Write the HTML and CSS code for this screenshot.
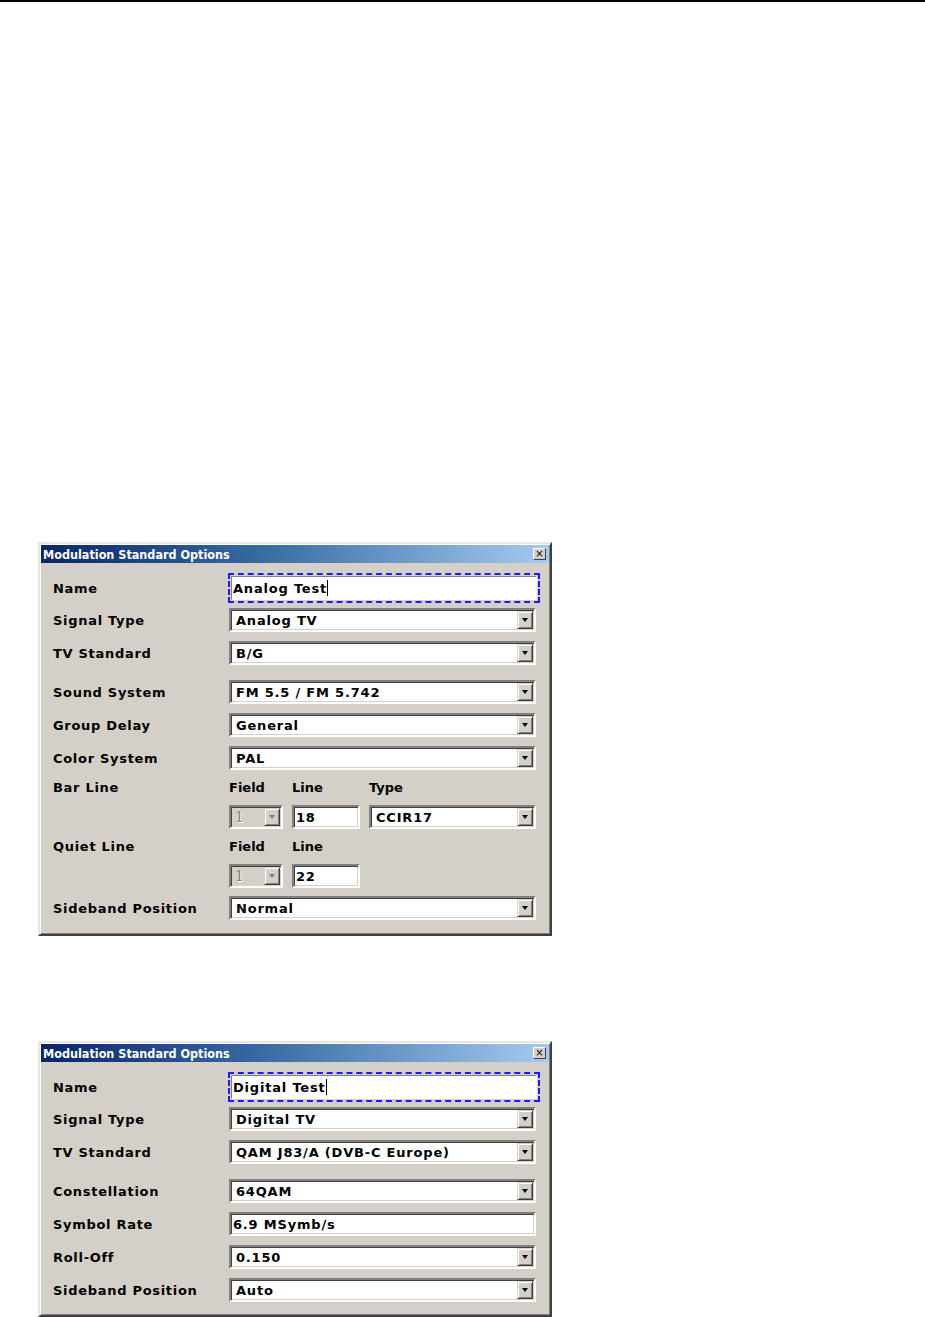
FILE: index.html
```html
<!DOCTYPE html>
<html lang="en">
<head>
    <meta charset="UTF-8">
    <title>Modulation Standard Options</title>
    <link rel="stylesheet" href="styles.css">
</head>
<body>
    <div class="rule"></div>
    <div class="page">
        <div class="dialog first">
            <div class="titlebar">
                <span class="title">Modulation Standard Options</span>
                <span class="close">&#215;</span>
            </div>
            <div class="body">
                <div class="row name-row">
                    <span class="label">Name</span>
                    <div class="focus"><div class="input">Analog Test<span class="caret"></span></div></div>
                </div>
                <div class="row gap-s">
                    <span class="label">Signal Type</span>
                    <div class="combo"><span class="value">Analog TV</span><span class="arrow"></span></div>
                </div>
                <div class="row">
                    <span class="label">TV Standard</span>
                    <div class="combo"><span class="value">B/G</span><span class="arrow"></span></div>
                </div>
                <div class="row gap-l">
                    <span class="label">Sound System</span>
                    <div class="combo"><span class="value">FM 5.5 / FM 5.742</span><span class="arrow"></span></div>
                </div>
                <div class="row">
                    <span class="label">Group Delay</span>
                    <div class="combo"><span class="value">General</span><span class="arrow"></span></div>
                </div>
                <div class="row">
                    <span class="label">Color System</span>
                    <div class="combo"><span class="value">PAL</span><span class="arrow"></span></div>
                </div>
                <div class="row head-row">
                    <span class="label">Bar Line</span>
                    <div class="sub">
                        <span>Field</span><span>Line</span><span>Type</span>
                    </div>
                </div>
                <div class="row sub-row">
                    <span class="label"></span>
                    <div class="sub">
                        <div class="combo disabled"><span class="value">1</span><span class="arrow"></span></div>
                        <div class="input">18</div>
                        <div class="combo"><span class="value">CCIR17</span><span class="arrow"></span></div>
                    </div>
                </div>
                <div class="row head-row">
                    <span class="label">Quiet Line</span>
                    <div class="sub">
                        <span>Field</span><span>Line</span>
                    </div>
                </div>
                <div class="row sub-row">
                    <span class="label"></span>
                    <div class="sub">
                        <div class="combo disabled"><span class="value">1</span><span class="arrow"></span></div>
                        <div class="input">22</div>
                    </div>
                </div>
                <div class="row gap-xs">
                    <span class="label">Sideband Position</span>
                    <div class="combo"><span class="value">Normal</span><span class="arrow"></span></div>
                </div>
            </div>
        </div>

        <div class="dialog second">
            <div class="titlebar">
                <span class="title">Modulation Standard Options</span>
                <span class="close">&#215;</span>
            </div>
            <div class="body">
                <div class="row name-row">
                    <span class="label">Name</span>
                    <div class="focus"><div class="input">Digital Test<span class="caret"></span></div></div>
                </div>
                <div class="row gap-s">
                    <span class="label">Signal Type</span>
                    <div class="combo"><span class="value">Digital TV</span><span class="arrow"></span></div>
                </div>
                <div class="row">
                    <span class="label">TV Standard</span>
                    <div class="combo"><span class="value">QAM J83/A (DVB-C Europe)</span><span class="arrow"></span></div>
                </div>
                <div class="row gap-l">
                    <span class="label">Constellation</span>
                    <div class="combo"><span class="value">64QAM</span><span class="arrow"></span></div>
                </div>
                <div class="row">
                    <span class="label">Symbol Rate</span>
                    <div class="input wide">6.9 MSymb/s</div>
                </div>
                <div class="row">
                    <span class="label">Roll-Off</span>
                    <div class="combo"><span class="value">0.150</span><span class="arrow"></span></div>
                </div>
                <div class="row">
                    <span class="label">Sideband Position</span>
                    <div class="combo"><span class="value">Auto</span><span class="arrow"></span></div>
                </div>
            </div>
        </div>
    </div>
</body>
</html>
```

FILE: styles.css
```css
body {
    margin: 0;
    background: #fff;
    font-family: "DejaVu Sans", Verdana, sans-serif;
    font-size: 13px;
    font-weight: bold;
    color: #000;
}
.rule {
    height: 2px;
    background: #000;
}
.page {
    padding-left: 38px;
}
.dialog {
    width: 508px;
    background: #d4d0c8;
    border: 2px solid;
    border-color: #e8e6e1 #404040 #404040 #e8e6e1;
    box-shadow: inset 1px 1px 0 #fff, inset -1px -1px 0 #808080;
    padding: 1px;
}
.first {
    margin-top: 540px;
    height: 388px;
}
.second {
    margin-top: 105px;
    height: 270px;
}
.titlebar {
    height: 18px;
    display: flex;
    align-items: center;
    justify-content: space-between;
    background: linear-gradient(to right, #0a246a, #3a6ea5 45%, #a6caf0);
    padding: 0 3px 0 2px;
}
.title {
    color: #fff;
    font-family: "DejaVu Sans Condensed", "DejaVu Sans", sans-serif;
    font-size: 12.5px;
}
.close {
    width: 11px;
    height: 10px;
    background: #d4d0c8;
    border: 1px solid;
    border-color: #fff #404040 #404040 #fff;
    font-size: 10px;
    line-height: 9px;
    text-align: center;
    color: #000;
    font-weight: normal;
}
.body {
    padding: 10px 0 0 12px;
}
.row {
    display: grid;
    grid-template-columns: 176px 307px;
    align-items: center;
    height: 24px;
    margin-top: 9px;
}
.name-row {
    height: 30px;
    margin-top: 0;
}
.gap-s { margin-top: 5px; }
.gap-l { margin-top: 15px; }
.gap-xs { margin-top: 8px; }
.head-row {
    height: 16px;
    margin-top: 9px;
}
.sub-row {
    margin-top: 10px;
}
.label {
    letter-spacing: 0.7px;
}
.combo, .input {
    box-sizing: border-box;
    height: 24px;
    background: #fff;
    border: 2px solid;
    border-color: #808080 #fff #fff #808080;
    box-shadow: inset 1px 1px 0 #404040, inset -1px -1px 0 #d4d0c8;
    display: flex;
    align-items: center;
    letter-spacing: 0.8px;
}
.combo .value {
    flex: 1;
    padding-left: 5px;
}
.input {
    padding-left: 2px;
}
.arrow {
    box-sizing: border-box;
    width: 16px;
    height: 18px;
    margin-right: 1px;
    background: #d4d0c8;
    border: 1px solid;
    border-color: #d4d0c8 #404040 #404040 #d4d0c8;
    box-shadow: inset 1px 1px 0 #fff, inset -1px -1px 0 #808080;
    position: relative;
}
.arrow::after {
    content: "";
    position: absolute;
    left: 4px;
    top: 6px;
    border-left: 3.5px solid transparent;
    border-right: 3.5px solid transparent;
    border-top: 4px solid #000;
}
.focus {
    margin-left: -1px;
    width: 312px;
    height: 30px;
    box-sizing: border-box;
    border: 2px dashed #1a1aff;
    padding: 1px;
}
.focus .input {
    height: 24px;
    border: 1px solid;
    border-color: #808080 #fff #fff #808080;
    box-shadow: none;
    padding-left: 1px;
}
.caret {
    display: inline-block;
    width: 1px;
    height: 16px;
    background: #000;
}
.sub {
    display: flex;
    align-items: center;
    gap: 9px;
}
.head-row .sub span:nth-child(1) { width: 54px; }
.head-row .sub span:nth-child(2) { width: 68px; }
.sub-row .combo.disabled {
    width: 54px;
    background: #d4d0c8;
    color: #808080;
    text-shadow: 1px 1px 0 #fff;
    font-family: "DejaVu Serif", serif;
    font-weight: normal;
    font-size: 14px;
}
.combo.disabled .value {
    padding-left: 4px;
}
.combo.disabled .arrow::after {
    border-top-color: #808080;
}
.sub-row .input {
    width: 68px;
}
.sub-row .combo:last-child {
    width: 167px;
}
.input.wide {
    width: 307px;
}
```
